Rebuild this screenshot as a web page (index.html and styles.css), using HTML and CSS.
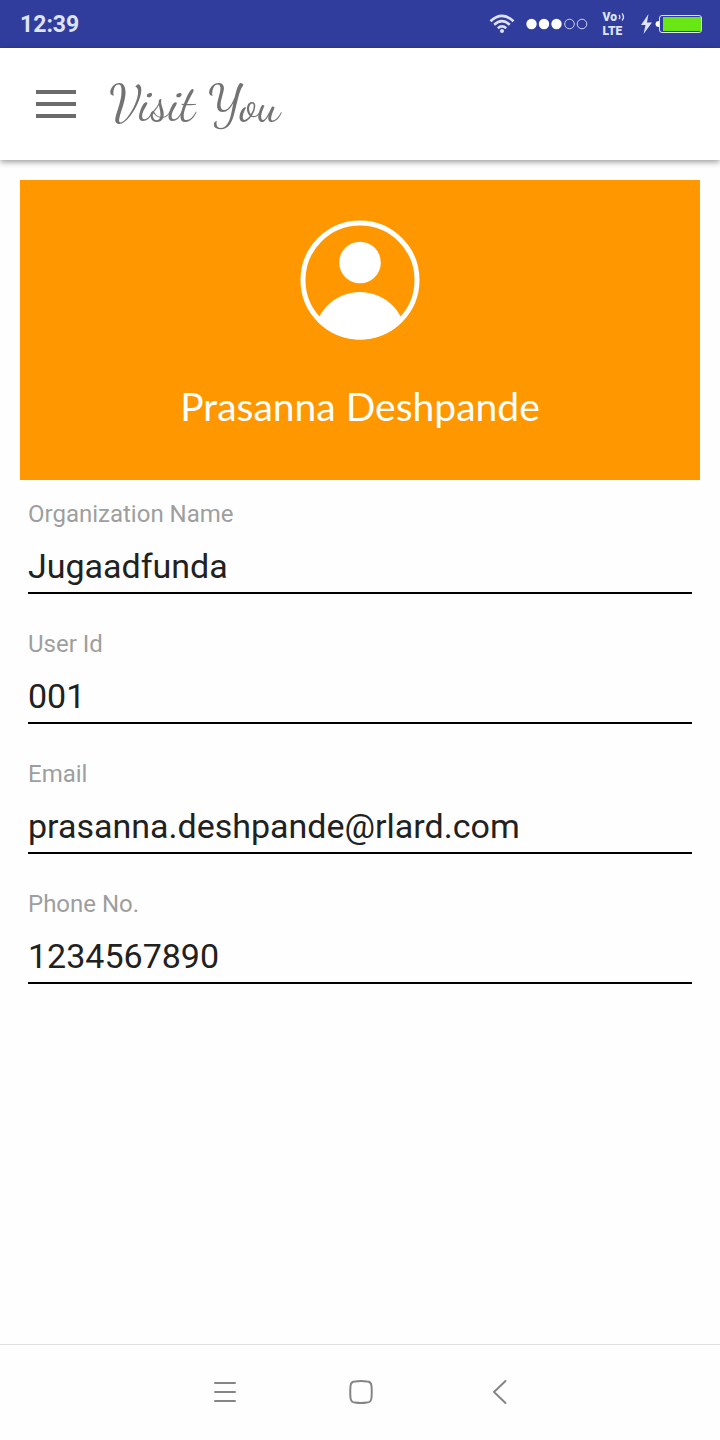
FILE: index.html
```html
<!DOCTYPE html>
<html lang="en">
<head>
<meta charset="utf-8">
<meta name="viewport" content="width=device-width, initial-scale=1">
<title>Visit You</title>
<link rel="stylesheet" href="styles.css">
</head>
<body>
<div class="screen">
  <div class="status-bar">
    <time class="clock">12:39</time>
    <div class="status-icons">
      <svg class="wifi" width="26" height="20" viewBox="0 0 26 20" aria-hidden="true">
        <g fill="none" stroke="#dfe2fb" stroke-width="2.6">
          <path d="M1.5 7.2Q13-3.400 24.500 7.200"/>
          <path d="M5.200 10.800Q13 3.600 20.800 10.800"/>
          <path d="M8.800 14.200Q13 10.600 17.200 14.200"/>
        </g>
        <circle cx="13" cy="17" r="2" fill="#dfe2fb"/>
      </svg>
      <svg class="signal" width="62" height="12" viewBox="0 0 62 12" aria-hidden="true">
        <g fill="#fff"><circle cx="5.500" cy="6" r="5.200"/><circle cx="18" cy="6" r="5.200"/><circle cx="30.500" cy="6" r="5.200"/></g>
        <g fill="none" stroke="#cdd1f2"><circle cx="43.500" cy="6" r="4.800"/><circle cx="56" cy="6" r="4.800"/></g>
      </svg>
      <div class="volte">
        <div class="volte-top"><span>Vo</span>
          <svg width="8" height="8" viewBox="0 0 8 8" aria-hidden="true"><path d="M2 2Q3.800 4 2 6M5 .5Q8 4 5 7.500" fill="none" stroke="#dfe2fb" stroke-width="1.300"/></svg>
        </div>
        <div>LTE</div>
      </div>
      <svg class="battery" width="62" height="20" viewBox="0 0 62 20" aria-hidden="true">
        <path d="M8.500 0 1 11h4.500L3.500 20 12 8.500H7z" fill="#dfe2fb"/>
        <path d="M19 7q-3.500 0-3.500 3t3.500 3z" fill="#fff"/>
        <rect x="19.500" y="1.500" width="42" height="17" rx="2.500" fill="none" stroke="#dfe2fb"/>
        <path d="M23 3H61v14H23z" fill="#68e715"/>
      </svg>
    </div>
  </div>

  <header class="app-bar">
    <button class="menu-button" type="button" aria-label="Open menu">
      <svg width="42" height="30" viewBox="0 0 42 30" aria-hidden="true"><path d="M1 3h40M1 15h40M1 27h40" stroke="#6b6b6b" stroke-width="4"/></svg>
    </button>
    <h1 class="app-title">Visit You</h1>
  </header>

  <main class="content">
    <section class="profile">
      <svg class="avatar" width="120" height="120" viewBox="0 0 120 120" aria-hidden="true">
        <defs><clipPath id="disc"><circle cx="60" cy="60" r="59.500"/></clipPath></defs>
        <circle cx="60" cy="60" r="57" fill="none" stroke="#fff" stroke-width="5"/>
        <circle cx="60" cy="42.500" r="20.800" fill="#fff"/>
        <circle cx="60" cy="118" r="46" fill="#fff" clip-path="url(#disc)"/>
      </svg>
      <h2 class="profile-name">Prasanna Deshpande</h2>
    </section>

    <form class="fields">
      <div class="field">
        <label for="organization">Organization Name</label>
        <input id="organization" type="text" value="Jugaadfunda">
      </div>
      <div class="field">
        <label for="user-id">User Id</label>
        <input id="user-id" type="text" value="001">
      </div>
      <div class="field">
        <label for="email">Email</label>
        <input id="email" type="email" value="prasanna.deshpande@rlard.com" spellcheck="false">
      </div>
      <div class="field">
        <label for="phone">Phone No.</label>
        <input id="phone" type="tel" value="1234567890">
      </div>
    </form>
  </main>

  <nav class="system-nav" aria-label="System">
    <button type="button" aria-label="Recent apps">
      <svg width="28" height="26" viewBox="0 0 28 26" aria-hidden="true"><path d="M7 3h20M7 12h20M7 21h20"/></svg>
    </button>
    <button type="button" aria-label="Home">
      <svg width="28" height="26" viewBox="0 0 28 26" aria-hidden="true"><path d="M9 1.500Q15 .5 21 1.500Q25 1.500 25.500 6Q26 12 25.500 18Q25 22.500 21 22.500Q15 23.500 9 22.500Q5 22.500 4.500 18Q4 12 4.500 6Q5 1.500 9 1.500Z"/></svg>
    </button>
    <button type="button" aria-label="Back">
      <svg width="28" height="26" viewBox="0 0 28 26" aria-hidden="true"><path d="M21.500 1 10 12 21.500 23"/></svg>
    </button>
  </nav>
</div>
</body>
</html>
```

FILE: styles.css
```css
* {
  box-sizing: border-box;
}

body {
  margin: 0;
  background: #fefefe;
  color: #212121;
  font-family: Roboto, "Liberation Sans", sans-serif;
}

button {
  display: flex;
  align-items: center;
  justify-content: center;
  padding: 0;
  border: 0;
  background: none;
}

svg {
  display: block;
}

.screen {
  display: flex;
  flex-direction: column;
  min-height: 100vh;
}

.status-bar {
  display: flex;
  align-items: center;
  justify-content: space-between;
  height: 48px;
  padding: 0 18px 0 20px;
  background: #303d9d;
  color: #dfe2fb;
}

.clock {
  font-size: 23px;
  font-weight: 700;
  line-height: 28px;
  padding-top: 2px;
}

.status-icons {
  display: flex;
  align-items: center;
  gap: 15px;
}

.wifi {
  margin-right: -4px;
}

.volte {
  font-family: Roboto, sans-serif;
  font-size: 12px;
  font-weight: 900;
  line-height: 14px;
}

.volte-top {
  display: flex;
  align-items: center;
}

.app-bar {
  display: flex;
  align-items: center;
  gap: 32px;
  height: 112px;
  padding: 0 35px;
  background: #fff;
  box-shadow: 0 2px 6px rgba(0, 0, 0, 0.4);
}

.app-title {
  margin: 0;
  color: #737373;
  font-family: "Dancing Script", "Liberation Serif", cursive;
  font-size: 50px;
  font-weight: 400;
  line-height: 56px;
}

.content {
  flex: 1;
  padding: 20px;
}

.profile {
  display: flex;
  flex-direction: column;
  align-items: center;
  gap: 40px;
  padding: 40px 20px 48px;
  background: #ff9800;
}

.profile-name {
  margin: 0;
  color: #fff;
  font-family: "Coming Soon", Lato, sans-serif;
  font-size: 39px;
  font-weight: 400;
  line-height: 52px;
}

.fields {
  display: flex;
  flex-direction: column;
  gap: 36px;
  padding: 20px 8px;
}

.field {
  display: flex;
  flex-direction: column;
  gap: 14px;
}

.field label {
  color: #9e9e9e;
  font-size: 24px;
  line-height: 28px;
}

.field input {
  width: 100%;
  height: 52px;
  padding: 0 0 2px;
  border: 0;
  border-bottom: 2px solid #000;
  border-radius: 0;
  outline: 0;
  background: none;
  color: #212121;
  font-family: inherit;
  font-size: 34px;
  line-height: 44px;
}

.system-nav {
  display: flex;
  justify-content: center;
  gap: 110px;
  height: 96px;
  border-top: 1px solid #e0e0e0;
}

.system-nav svg {
  fill: none;
  stroke: #858585;
  stroke-width: 2;
  stroke-linecap: round;
  stroke-linejoin: round;
}
```
